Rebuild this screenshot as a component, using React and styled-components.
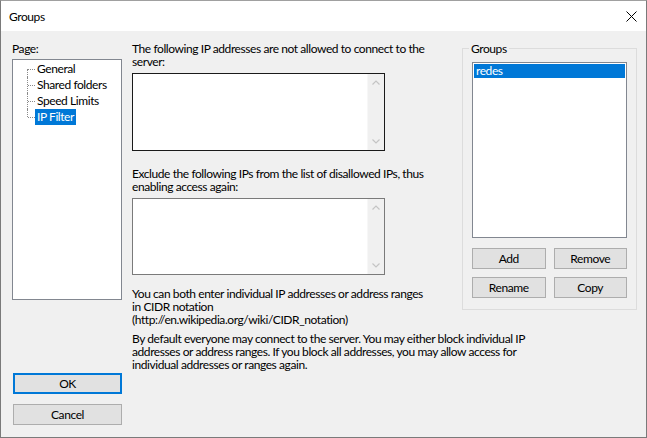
import React from 'react';
import styled, { createGlobalStyle } from 'styled-components';

const Global = createGlobalStyle`
  html, body { margin: 0; padding: 0; background: #fff; }
  body {
    font-family: "Lato", "Noto Sans", sans-serif;
    font-size: 12px;
    letter-spacing: -0.42px;
    color: #000;
  }
  * { box-sizing: border-box; }
`;

const Window = styled.div`
  width: 647px;
  height: 438px;
  border: 1px solid #7a7a7a;
  border-top-color: #a0a0a0;
  display: flex;
  flex-direction: column;
  background: #f0f0f0;
  overflow: hidden;
`;

const TitleBar = styled.div`
  height: 30px;
  flex-shrink: 0;
  background: #fff;
  display: flex;
  align-items: center;
  justify-content: space-between;
  padding: 0 9px 0 8px;
  font-size: 12px;
`;

const Body = styled.div`
  flex: 1;
  display: grid;
  grid-template-columns: 110px 10px 330px 175px;
  grid-template-rows: auto 1fr;
  grid-template-areas:
    "left . mid groups"
    "left . note note";
  padding: 11px 8px 12px 11px;
  line-height: 13px;
`;

const LeftCol = styled.div`
  grid-area: left;
  display: flex;
  flex-direction: column;
`;

const Label = styled.div`
  white-space: nowrap;
  margin-top: ${p => p.$mt || 0}px;
  margin-bottom: ${p => p.$mb || 0}px;
`;

const TreeBox = styled.div`
  margin-top: 4px;
  height: 241px;
  background: #fff;
  border: 1px solid #828790;
  padding: 1px 0 0 14px;
`;

const TreeRow = styled.div`
  height: 16px;
  display: flex;
  align-items: stretch;
`;

const Connector = styled.div`
  position: relative;
  width: 8px;
  flex-shrink: 0;
  &::before {
    content: "";
    position: absolute;
    left: 0;
    top: ${p => (p.$first ? '8px' : '0')};
    height: ${p => (p.$first || p.$last ? '8px' : '16px')};
    border-left: 1px dotted #8a8a8a;
  }
  &::after {
    content: "";
    position: absolute;
    left: 1px;
    top: 8px;
    width: 7px;
    border-top: 1px dotted #8a8a8a;
  }
`;

const TreeLabel = styled.span`
  padding: 0 2px;
  line-height: 16px;
  white-space: nowrap;
  background: ${p => (p.$selected ? '#0078d7' : 'transparent')};
  color: ${p => (p.$selected ? '#fff' : '#000')};
`;

const ButtonStack = styled.div`
  margin-top: auto;
  display: flex;
  flex-direction: column;
  gap: 10px;
  padding-left: 1px;
`;

const Button = styled.button`
  font: inherit;
  letter-spacing: inherit;
  font-size: 12px;
  color: #000;
  height: 21px;
  width: 100%;
  background: #e1e1e1;
  border: ${p => (p.$default ? '2px solid #0078d7' : '1px solid #adadad')};
  padding: 0;
  display: flex;
  align-items: center;
  justify-content: center;
`;

const MidCol = styled.div`
  grid-area: mid;
  display: flex;
  flex-direction: column;
  padding-bottom: 6px;
`;

const TextArea = styled.div`
  width: 253px;
  height: ${p => p.$h}px;
  background: #fff;
  border: 1px solid ${p => (p.$focused ? '#1a1a1a' : '#7a7a7a')};
  display: flex;
  justify-content: flex-end;
`;

const ScrollBar = styled.div`
  width: 17px;
  background: #f0f0f0;
  border-left: 1px solid #f7f7f7;
  display: flex;
  flex-direction: column;
  justify-content: space-between;
  align-items: center;
  padding: 6px 0;
`;

const GroupBox = styled.fieldset`
  grid-area: groups;
  margin: 0;
  padding: 0 9px 11px 9px;
  border: 1px solid #dcdcdc;
  align-self: start;
`;

const Legend = styled.legend`
  padding: 0 2px;
  margin-left: -3px;
  line-height: 13px;
`;

const ListBox = styled.div`
  margin-top: 7px;
  height: 176px;
  background: #fff;
  border: 1px solid #828790;
  padding: 1px;
`;

const ListItem = styled.div`
  height: 14px;
  line-height: 13px;
  padding-left: 2px;
  background: ${p => (p.$selected ? '#0078d7' : 'transparent')};
  color: ${p => (p.$selected ? '#fff' : '#000')};
`;

const ButtonGrid = styled.div`
  margin-top: 10px;
  display: grid;
  grid-template-columns: 1fr 1fr;
  gap: 8px;
`;

const Note = styled.div`
  grid-area: note;
  white-space: nowrap;
`;

const Chevron = ({ up }) => (
  <svg width="8" height="5" viewBox="0 0 8 5">
    <polyline
      points={up ? '0.5,4.5 4,1 7.5,4.5' : '0.5,0.5 4,4 7.5,0.5'}
      fill="none"
      stroke="#c4c4c4"
      strokeWidth="1.2"
    />
  </svg>
);

const CloseIcon = () => (
  <svg width="11" height="11" viewBox="0 0 11 11">
    <path d="M0.5 0.5 L10.5 10.5 M10.5 0.5 L0.5 10.5" stroke="#000" strokeWidth="1" fill="none" />
  </svg>
);

const Scroll = () => (
  <ScrollBar>
    <Chevron up />
    <Chevron />
  </ScrollBar>
);

const pages = ['General', 'Shared folders', 'Speed Limits', 'IP Filter'];

export default function App() {
  return (
    <>
      <Global />
      <Window>
        <TitleBar>
          <span>Groups</span>
          <CloseIcon />
        </TitleBar>
        <Body>
          <LeftCol>
            <Label>Page:</Label>
            <TreeBox>
              {pages.map((p, i) => (
                <TreeRow key={p}>
                  <Connector $first={i === 0} $last={i === pages.length - 1} />
                  <TreeLabel $selected={p === 'IP Filter'}>{p}</TreeLabel>
                </TreeRow>
              ))}
            </TreeBox>
            <ButtonStack>
              <Button $default>OK</Button>
              <Button>Cancel</Button>
            </ButtonStack>
          </LeftCol>

          <MidCol>
            <Label $mb={5}>
              The following IP addresses are not allowed to connect to the
              <br />
              server:
            </Label>
            <TextArea $h={78} $focused>
              <Scroll />
            </TextArea>
            <Label $mt={16} $mb={5}>
              Exclude the following IPs from the list of disallowed IPs, thus
              <br />
              enabling access again:
            </Label>
            <TextArea $h={77}>
              <Scroll />
            </TextArea>
            <Label $mt={12}>
              You can both enter individual IP addresses or address ranges
              <br />
              in CIDR notation
              <br />
              (http://en.wikipedia.org/wiki/CIDR_notation)
            </Label>
          </MidCol>

          <GroupBox>
            <Legend>Groups</Legend>
            <ListBox>
              <ListItem $selected>redes</ListItem>
            </ListBox>
            <ButtonGrid>
              <Button>Add</Button>
              <Button>Remove</Button>
              <Button>Rename</Button>
              <Button>Copy</Button>
            </ButtonGrid>
          </GroupBox>

          <Note>
            By default everyone may connect to the server. You may either block individual IP
            <br />
            addresses or address ranges. If you block all addresses, you may allow access for
            <br />
            individual addresses or ranges again.
          </Note>
        </Body>
      </Window>
    </>
  );
}
